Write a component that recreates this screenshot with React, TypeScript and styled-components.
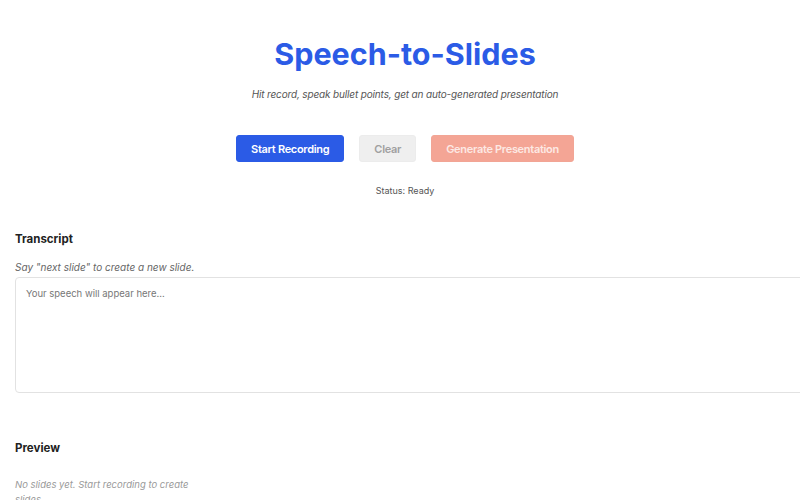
import React from "react";
import styled, { createGlobalStyle } from "styled-components";

const Global = createGlobalStyle`
  html, body { margin: 0; padding: 0; background: #ffffff; overflow-x: hidden; }
  body { font-family: Inter, "Noto Sans", sans-serif; color: #222; }
  * { box-sizing: border-box; }
`;

const Page = styled.div`
  padding: 0 5px 0 15px;
`;

const Header = styled.header`
  display: flex;
  flex-direction: column;
  align-items: center;
  padding-top: 34px;
`;

const Title = styled.h1`
  margin: 0;
  font-size: 30.5px;
  line-height: 40px;
  font-weight: 700;
  color: #2b5be6;
`;

const Subtitle = styled.p`
  margin: 13px 0 0;
  font-size: 10px;
  line-height: 14px;
  letter-spacing: -0.15px;
  font-style: italic;
  color: #555;
`;

const Controls = styled.div`
  display: flex;
  justify-content: center;
  gap: 15px;
  margin-top: 34px;
`;

const Button = styled.button<{ $variant: "primary" | "muted" | "danger" }>`
  height: 27px;
  padding: 0 14px;
  border-radius: 3px;
  font-family: Inter, sans-serif;
  font-size: 11px;
  letter-spacing: -0.3px;
  font-weight: 600;
  border: 1px solid
    ${(p) => (p.$variant === "primary" ? "#2b5be6" : p.$variant === "danger" ? "#f2a595" : "#ececec")};
  background: ${(p) => (p.$variant === "primary" ? "#2b5be6" : p.$variant === "danger" ? "#f4a595" : "#efefef")};
  color: ${(p) => (p.$variant === "primary" ? "#ffffff" : p.$variant === "danger" ? "#fde9e4" : "#a0a0a0")};
  cursor: pointer;
`;

const Status = styled.div`
  text-align: center;
  margin-top: 22px;
  font-size: 9px;
  line-height: 14px;
  color: #555;
`;

const Section = styled.section<{ $top: number }>`
  margin-top: ${(p) => p.$top}px;
`;

const Heading = styled.h2`
  margin: 0;
  font-size: 11.5px;
  line-height: 16px;
  font-weight: 700;
  color: #222;
`;

const Hint = styled.p`
  margin: 14px 0 0;
  font-size: 10px;
  line-height: 12px;
  font-style: italic;
  color: #666;
`;

const Transcript = styled.textarea`
  display: block;
  width: calc(100% + 30px);
  margin-top: 4px;
  height: 116px;
  padding: 9px 10px;
  border: 1px solid #e2e2e2;
  border-radius: 4px;
  font-family: Inter, sans-serif;
  font-size: 9.5px;
  line-height: 14px;
  color: #333;
  resize: none;
  outline: none;
  &::placeholder { color: #777; }
`;

const Empty = styled.p`
  margin: 21px 0 0;
  width: 182px;
  font-size: 9.5px;
  line-height: 15px;
  font-style: italic;
  color: #999;
`;

export default function App() {
  return (
    <Page>
      <Global />
      <Header>
        <Title>Speech-to-Slides</Title>
        <Subtitle>Hit record, speak bullet points, get an auto-generated presentation</Subtitle>
      </Header>
      <Controls>
        <Button $variant="primary">Start Recording</Button>
        <Button $variant="muted">Clear</Button>
        <Button $variant="danger">Generate Presentation</Button>
      </Controls>
      <Status>Status: Ready</Status>
      <Section $top={33}>
        <Heading>Transcript</Heading>
        <Hint>Say "next slide" to create a new slide.</Hint>
        <Transcript placeholder="Your speech will appear here..." />
      </Section>
      <Section $top={47}>
        <Heading>Preview</Heading>
        <Empty>No slides yet. Start recording to create slides.</Empty>
      </Section>
    </Page>
  );
}
